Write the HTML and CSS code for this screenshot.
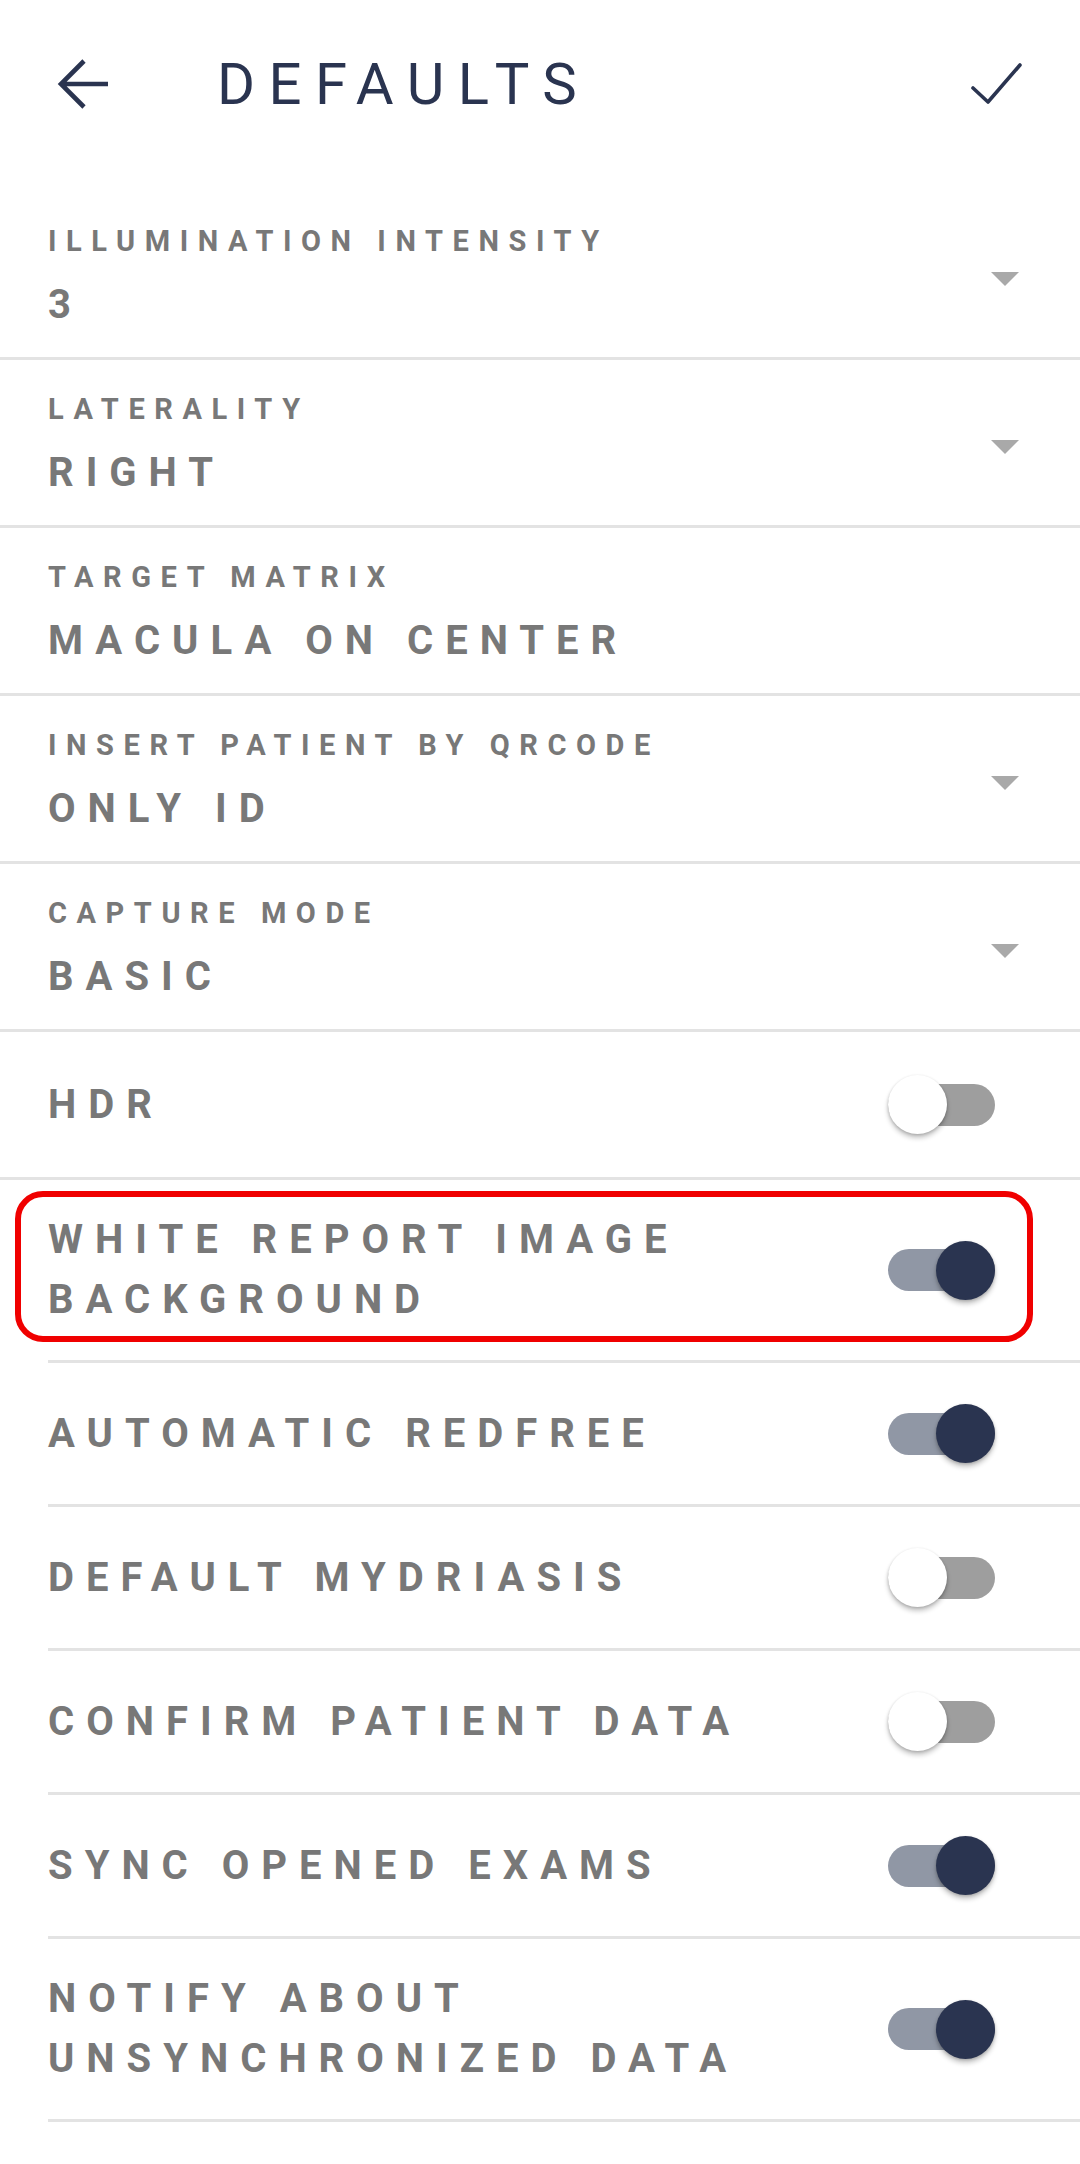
FILE: index.html
```html
<!DOCTYPE html>
<html lang="en">
<head>
<meta charset="utf-8">
<title>Defaults</title>
<link rel="stylesheet" href="styles.css">
</head>
<body>
<div class="screen">
  <header class="topbar">
    <button class="icon-btn back" aria-label="Back">
      <svg width="54" height="52" viewBox="0 0 54 52"><path d="M52 26H5M28 3L5 26L28 49" fill="none" stroke="#2a3450" stroke-width="4.6" stroke-linejoin="miter"/></svg>
    </button>
    <h1 class="title">DEFAULTS</h1>
    <button class="icon-btn confirm" aria-label="Save">
      <svg width="54" height="44" viewBox="0 0 54 44"><path d="M3 26L18 40L50 3" fill="none" stroke="#2a3450" stroke-width="3.6" stroke-linecap="round" stroke-linejoin="round"/></svg>
    </button>
  </header>

  <main class="list">
    <div class="row select-row">
      <div class="field"><div class="label">ILLUMINATION INTENSITY</div><div class="value">3</div></div>
      <span class="caret"></span>
    </div>
    <div class="row select-row">
      <div class="field"><div class="label">LATERALITY</div><div class="value">RIGHT</div></div>
      <span class="caret"></span>
    </div>
    <div class="row select-row">
      <div class="field"><div class="label">TARGET MATRIX</div><div class="value">MACULA ON CENTER</div></div>
    </div>
    <div class="row select-row">
      <div class="field"><div class="label">INSERT PATIENT BY QRCODE</div><div class="value">ONLY ID</div></div>
      <span class="caret"></span>
    </div>
    <div class="row select-row">
      <div class="field"><div class="label">CAPTURE MODE</div><div class="value">BASIC</div></div>
      <span class="caret"></span>
    </div>

    <div class="row switch-row full">
      <div class="switch-label">HDR</div>
      <span class="switch off"><span class="track"></span><span class="thumb"></span></span>
    </div>
    <div class="row switch-row inset marked">
      <div class="switch-label">WHITE REPORT IMAGE BACKGROUND</div>
      <span class="switch on"><span class="track"></span><span class="thumb"></span></span>
      <span class="highlight"></span>
    </div>
    <div class="row switch-row inset">
      <div class="switch-label">AUTOMATIC REDFREE</div>
      <span class="switch on"><span class="track"></span><span class="thumb"></span></span>
    </div>
    <div class="row switch-row inset">
      <div class="switch-label">DEFAULT MYDRIASIS</div>
      <span class="switch off"><span class="track"></span><span class="thumb"></span></span>
    </div>
    <div class="row switch-row inset">
      <div class="switch-label">CONFIRM PATIENT DATA</div>
      <span class="switch off"><span class="track"></span><span class="thumb"></span></span>
    </div>
    <div class="row switch-row inset">
      <div class="switch-label">SYNC OPENED EXAMS</div>
      <span class="switch on"><span class="track"></span><span class="thumb"></span></span>
    </div>
    <div class="row switch-row inset">
      <div class="switch-label">NOTIFY ABOUT UNSYNCHRONIZED DATA</div>
      <span class="switch on"><span class="track"></span><span class="thumb"></span></span>
    </div>
  </main>
</div>
</body>
</html>
```

FILE: styles.css
```css
* { box-sizing: border-box; }

html, body {
  margin: 0;
  padding: 0;
  background: #ffffff;
}

body {
  font-family: Roboto, "Noto Sans", "Liberation Sans", sans-serif;
  width: 1080px;
  min-height: 2164px;
  overflow: hidden;
}

.screen {
  width: 1080px;
}

/* Top bar */
.topbar {
  height: 168px;
  display: flex;
  align-items: center;
}

.icon-btn {
  background: none;
  border: 0;
  padding: 0;
  margin: 0;
  display: flex;
  align-items: center;
  justify-content: center;
}

.icon-btn svg { display: block; }

.back {
  margin-left: 56px;
}

.title {
  margin: 0 0 0 107px;
  font-size: 58px;
  line-height: 58px;
  font-weight: 400;
  letter-spacing: 13.5px;
  color: #2a3450;
}

.confirm {
  margin-left: auto;
  margin-right: 56px;
}

/* List */
.list {
  padding-top: 24px;
}

.row {
  display: flex;
  border-bottom: 3px solid #e3e3e3;
}

.select-row {
  height: 168px;
  padding: 0 61px 0 48px;
  align-items: flex-start;
}

.field {
  padding-top: 31px;
}

.label {
  font-size: 29px;
  line-height: 36px;
  font-weight: 700;
  letter-spacing: 0.33em;
  color: #787878;
}

.value {
  margin-top: 22px;
  font-size: 40px;
  line-height: 48px;
  font-weight: 700;
  letter-spacing: 0.3em;
  color: #787878;
}

.caret {
  margin-left: auto;
  margin-top: 80px;
  width: 0;
  height: 0;
  border-left: 14.5px solid transparent;
  border-right: 14.5px solid transparent;
  border-top: 14px solid #a9a9a9;
}

/* Switch rows */
.switch-row {
  align-items: center;
  min-height: 144px;
  padding: 30px 85px 30px 0;
  position: relative;
}

.switch-row.full {
  min-height: 148px;
  padding-left: 48px;
}

.switch-row.inset {
  margin-left: 48px;
}

.switch-label {
  flex: 1;
  font-size: 40px;
  line-height: 60px;
  font-weight: 700;
  letter-spacing: 0.3em;
  color: #787878;
  padding-right: 40px;
}

.switch {
  position: relative;
  flex: none;
  width: 107px;
  height: 59px;
}

.track {
  position: absolute;
  left: 0;
  right: 0;
  top: 8.5px;
  height: 42px;
  border-radius: 21px;
}

.thumb {
  position: absolute;
  top: 0;
  width: 59px;
  height: 59px;
  border-radius: 50%;
  box-shadow: 0 4px 5px rgba(0, 0, 0, 0.22), 0 1px 3px rgba(0, 0, 0, 0.18);
}

.switch.off .track { background: #9e9e9e; }
.switch.off .thumb { left: 0; background: #ffffff; }

.switch.on .track { background: #9097a5; }
.switch.on .thumb { right: 0; background: #2a3450; }

/* Red annotation box */
.highlight {
  position: absolute;
  top: 11px;
  bottom: 18px;
  left: -33px;
  right: 47px;
  border: 6px solid #f00000;
  border-radius: 28px;
  pointer-events: none;
}
```
